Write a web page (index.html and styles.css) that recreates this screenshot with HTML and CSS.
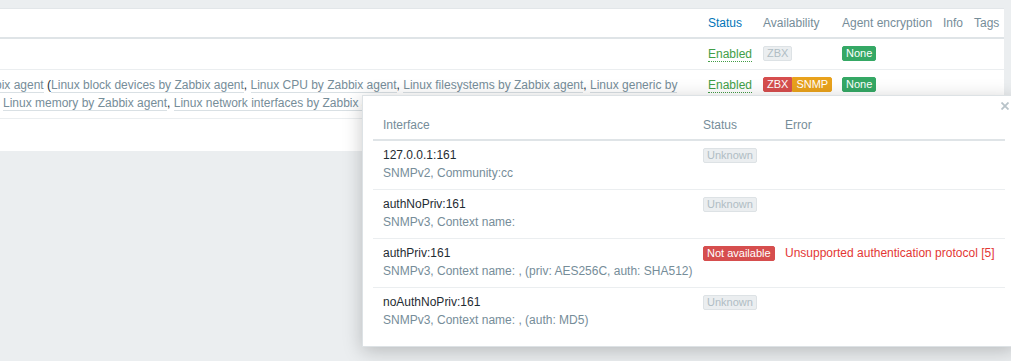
FILE: index.html
```html
<!DOCTYPE html>
<html lang="en">
<head>
<meta charset="utf-8">
<title>Hosts</title>
<link rel="stylesheet" href="styles.css">
</head>
<body>
<div class="page">
  <div class="hosts">
    <div class="row head">
      <div class="cell name"></div>
      <div class="cell"><span class="sort">Status</span></div>
      <div class="cell">Availability</div>
      <div class="cell">Agent encryption</div>
      <div class="cell">Info</div>
      <div class="cell">Tags</div>
    </div>
    <div class="row r1">
      <div class="cell name"></div>
      <div class="cell"><span class="enabled">Enabled</span></div>
      <div class="cell"><span class="badge grey">ZBX</span></div>
      <div class="cell"><span class="badge green">None</span></div>
      <div class="cell"></div>
      <div class="cell"></div>
    </div>
    <div class="row r2">
      <div class="cell name">
        <div class="line first"><a class="tpl">bix agent</a> (<a class="tpl">Linux block devices by Zabbix agent</a>, <a class="tpl">Linux CPU by Zabbix agent</a>, <a class="tpl">Linux filesystems by Zabbix agent</a>, <a class="tpl">Linux generic by</a></div>
        <div class="line second"><a class="tpl">Linux memory by Zabbix agent</a>, <a class="tpl">Linux network interfaces by Zabbix agent</a>, <a class="tpl">Linux OS by Zabbix agent</a>)</div>
      </div>
      <div class="cell"><span class="enabled">Enabled</span></div>
      <div class="cell"><span class="group"><span class="badge red">ZBX</span><span class="badge orange">SNMP</span></span></div>
      <div class="cell"><span class="badge green">None</span></div>
      <div class="cell"></div>
      <div class="cell"></div>
    </div>
    <div class="row r3">
      <div class="cell name"></div>
      <div class="cell"></div>
      <div class="cell"></div>
      <div class="cell"></div>
      <div class="cell"></div>
      <div class="cell"></div>
    </div>
  </div>

  <div class="overlay">
    <button class="close" aria-label="Close"><svg width="8" height="8" viewBox="0 0 8 8"><path d="M0.5 0.5L7.5 7.5M7.5 0.5L0.5 7.5" stroke="currentColor" stroke-width="1.8" fill="none"/></svg></button>
    <div class="itable">
      <div class="irow ihead">
        <div class="icell">Interface</div>
        <div class="icell">Status</div>
        <div class="icell">Error</div>
      </div>
      <div class="irow">
        <div class="icell"><div>127.0.0.1:161</div><div class="sub">SNMPv2, Community:cc</div></div>
        <div class="icell"><span class="badge grey">Unknown</span></div>
        <div class="icell"></div>
      </div>
      <div class="irow">
        <div class="icell"><div>authNoPriv:161</div><div class="sub">SNMPv3, Context name: </div></div>
        <div class="icell"><span class="badge grey">Unknown</span></div>
        <div class="icell"></div>
      </div>
      <div class="irow">
        <div class="icell"><div>authPriv:161</div><div class="sub">SNMPv3, Context name: , (priv: AES256C, auth: SHA512)</div></div>
        <div class="icell"><span class="badge red">Not available</span></div>
        <div class="icell error">Unsupported authentication protocol [5]</div>
      </div>
      <div class="irow last">
        <div class="icell"><div>noAuthNoPriv:161</div><div class="sub">SNMPv3, Context name: , (auth: MD5)</div></div>
        <div class="icell"><span class="badge grey">Unknown</span></div>
        <div class="icell"></div>
      </div>
    </div>
  </div>
</div>
</body>
</html>
```

FILE: styles.css
```css
html, body {
  margin: 0;
  padding: 0;
  overflow: hidden;
}
body {
  background: #ebeef0;
  font-family: "Liberation Sans", Arial, sans-serif;
  font-size: 12px;
  color: #1f2c33;
  width: 1011px;
  height: 361px;
  position: relative;
}
.page {
  padding-top: 8px;
}
.hosts {
  margin-right: 7px;
  background: #fff;
  border-top: 1px solid #e2e6e9;
}
.row {
  display: grid;
  grid-template-columns: 1fr 55px 79px 101px 31px 35px;
  line-height: 18px;
  border-bottom: 1px solid #ebeef0;
}
.cell {
  padding: 6px 5px;
  white-space: nowrap;
  overflow: hidden;
}
.head {
  color: #768d99;
  border-bottom: 2px solid #dfe4e7;
}
.head .cell {
  padding-top: 5px;
  padding-bottom: 5px;
}
.sort {
  color: #0275b8;
}
.cell.name {
  padding-left: 0;
}
.r3 {
  height: 32px;
  border-bottom: none;
}
.line.first {
  margin-left: -5px;
}
.line.second {
  padding-left: 3px;
}
.tpl {
  color: #768d99;
  border-bottom: 1px solid #d9e0e4;
}
.enabled {
  color: #429e47;
  border-bottom: 1px dotted #429e47;
}
.badge {
  display: inline-block;
  vertical-align: top;
  margin-top: 1px;
  font-size: 11px;
  line-height: 13px;
  padding: 0 3px;
  border: 1px solid transparent;
  border-radius: 2px;
  color: #fff;
}
.badge.grey {
  background: #ebeef0;
  border-color: #dde2e5;
  color: #b0bdc4;
}
.badge.green {
  background: #35a865;
  border-color: #35a865;
}
.badge.red {
  background: #d64e4e;
  border-color: #d64e4e;
}
.badge.orange {
  background: #e9a21c;
  border-color: #e9a21c;
}
.group {
  display: inline-flex;
  vertical-align: top;
}
.group .badge:first-child {
  border-top-right-radius: 0;
  border-bottom-right-radius: 0;
}
.group .badge:last-child {
  border-top-left-radius: 0;
  border-bottom-left-radius: 0;
}

.overlay {
  position: absolute;
  left: 362px;
  top: 95px;
  width: 632px;
  padding: 15px 10px 10px;
  background: #fff;
  border: 1px solid #dde2e5;
  box-shadow: 0 4px 18px rgba(0, 0, 0, 0.22);
}
.close {
  position: absolute;
  top: 6px;
  right: 6px;
  width: 8px;
  height: 8px;
  padding: 0;
  border: 0;
  background: none;
  color: #b8c3c9;
  display: flex;
}
.irow {
  display: grid;
  grid-template-columns: 320px 82px 1fr;
  line-height: 18px;
  border-bottom: 1px solid #ebeef0;
}
.icell {
  padding: 5px 10px 7px;
  white-space: nowrap;
}
.ihead {
  color: #768d99;
  border-bottom: 2px solid #dfe4e7;
}
.ihead .icell {
  padding: 5px 10px;
}
.irow.last {
  border-bottom: none;
}
.sub {
  color: #768d99;
}
.icell .badge {
  margin-top: 2px;
}
.error {
  color: #e33734;
}
```
